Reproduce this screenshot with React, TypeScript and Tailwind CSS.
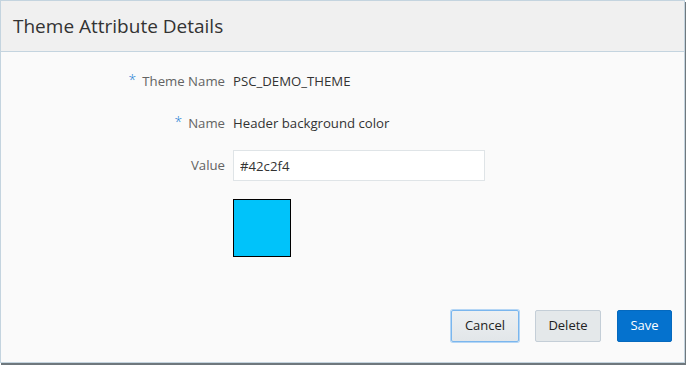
const FONT = "font-['Segoe_UI','Open_Sans','Noto_Sans',sans-serif]";

function Req() {
  return <span className="mr-[6px] relative top-[-3px] font-light text-[#1a7fd4] text-[14px]">*</span>;
}

export default function App() {
  return (
    <div className={`h-[365px] w-[686px] bg-white ${FONT}`}>
      <div className="flex h-[363px] w-[685px] flex-col border border-[#c4d4df] bg-[#fafafa] shadow-[1px_2px_0_#6f787d]">
        <div className="flex h-[51px] shrink-0 items-center border-b border-[#c4d4df] bg-[#f0f0f0] pl-3">
          <h1 className="text-[19px] text-[#333333]">Theme Attribute Details</h1>
        </div>

        <div className="flex flex-1 flex-col pt-[14px]">
          <div className="grid grid-cols-[224px_1fr] items-center gap-x-2 text-[13.2px]">
            <div className="flex h-[32px] items-center justify-end text-[#636363]">
              <Req />
              Theme Name
            </div>
            <div className="text-[#333333]">PSC_DEMO_THEME</div>

            <div className="mt-[10px] flex h-[32px] items-center justify-end text-[#636363]">
              <Req />
              Name
            </div>
            <div className="mt-[10px] text-[#333333]">Header background color</div>

            <div className="mt-[10px] flex h-[31px] items-center justify-end text-[#636363]">Value</div>
            <input
              className="mt-[10px] h-[31px] w-[252px] border border-[#dfe4e7] bg-white px-[6px] text-[13.2px] text-[#333333] outline-none"
              defaultValue="#42c2f4"
            />

            <div />
            <div className="mt-[18px] h-[58px] w-[58px] border border-black bg-[#00c3fa]" />
          </div>

          <div className="mt-auto flex justify-end gap-[16px] pb-[20px] pr-[12px] text-[13px]">
            <button className="h-[32px] w-[68px] rounded-[2px] border border-[#7ab6ee] bg-gradient-to-b from-[#edf0f2] to-[#e2e6e9] text-[#222222] shadow-[0_0_0_1px_#b5d6f5]">
              Cancel
            </button>
            <button className="h-[32px] w-[66px] rounded-[2px] border border-[#c4ced7] bg-[#e4e8ea] text-[#222222]">
              Delete
            </button>
            <button className="h-[32px] w-[55px] rounded-[2px] border border-[#0569be] bg-[#0572ce] text-white">
              Save
            </button>
          </div>
        </div>
      </div>
    </div>
  );
}
